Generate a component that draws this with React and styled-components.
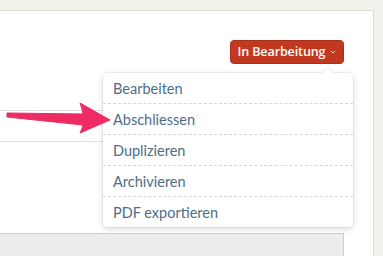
import React from 'react';
import styled, { createGlobalStyle } from 'styled-components';

const Global = createGlobalStyle`
    body {
        margin: 0;
        background: #f1f0ea;
        font-family: Lato, "Liberation Sans", sans-serif;
    }
`

const Page = styled.div`
    position: relative;
    width: 383px;
    height: 256px;
    overflow: hidden;
    padding: 10px 9px 0 0;
    box-sizing: border-box;
`

const Card = styled.div`
    position: relative;
    margin-left: -1px;
    height: 100%;
    background: #fff;
    border: 1px solid #dcdbd4;
    border-bottom: none;
    padding: 29px 29px 0 0;
    box-sizing: border-box;
`

const Header = styled.div`
    display: flex;
    justify-content: flex-end;
`

const StatusButton = styled.button`
    display: flex;
    align-items: center;
    gap: 5px;
    height: 24px;
    width: 114px;
    justify-content: center;
    padding: 0 0 1px;
    background: #c23920;
    border: 1px solid #a8301b;
    border-radius: 4px;
    color: #fff;
    font-family: "Open Sans", sans-serif;
    font-size: 12.5px;
    font-weight: 600;
    letter-spacing: -0.1px;
    cursor: pointer;
`

const Table = styled.div`
    margin-top: 16px;
`

const Row = styled.div`
    height: 30px;
    border-bottom: 1px solid #dfdfdf;
`

const GrayBox = styled.div`
    margin-top: 91px;
    height: 40px;
    background: #ececec;
    border: 1px solid #cfcfcf;
    margin-left: -2px;
`

const Menu = styled.ul`
    position: absolute;
    left: 103px;
    top: 73px;
    width: 250px;
    margin: 0;
    padding: 0;
    list-style: none;
    background: #fff;
    border-radius: 4px;
    box-shadow: 0 0 0 1px rgba(0, 0, 0, 0.05), 0 2px 6px rgba(0, 0, 0, 0.14);

    &::before {
        content: '';
        position: absolute;
        top: -4px;
        left: 221px;
        width: 8px;
        height: 8px;
        background: #fff;
        transform: rotate(45deg);
        box-shadow: -1px -1px 1px rgba(0, 0, 0, 0.06);
    }
`

const Item = styled.li`
    position: relative;
    height: 30px;
    padding-left: 10px;
    display: flex;
    align-items: center;
    color: #4d6e85;
    font-size: 14.5px;
    border-top: ${p => (p.first ? 'none' : '1px dashed #d6d6d6')};
`

const Arrow = styled.svg`
    position: absolute;
    left: 0;
    top: 95px;
`

const items = ['Bearbeiten', 'Abschliessen', 'Duplizieren', 'Archivieren', 'PDF exportieren']

export default function App() {
    return (
        <Page>
            <Global />
            <Card>
                <Header>
                    <StatusButton>
                        In Bearbeitung
                        <svg width="6" height="4" viewBox="0 0 6 4">
                            <path d="M0.8 0.8 L3 3 L5.2 0.8" fill="none" stroke="#f3d3cb" strokeWidth="1" />
                        </svg>
                    </StatusButton>
                </Header>
                <Table>
                    <Row />
                    <Row />
                </Table>
                <GrayBox />
            </Card>
            <Menu>
                {items.map((text, i) => (
                    <Item key={text} first={i === 0}>{text}</Item>
                ))}
            </Menu>
            <Arrow width="115" height="45" viewBox="0 0 115 45">
                <path
                    d="M7 18 L83 19 Q82 13 80 8 L110 25 L80 38 Q82 34 83 30 L7 22 Z"
                    fill="#ee2b63"
                    stroke="#ee2b63"
                    strokeWidth="1"
                    strokeLinejoin="round"
                />
            </Arrow>
        </Page>
    )
}
